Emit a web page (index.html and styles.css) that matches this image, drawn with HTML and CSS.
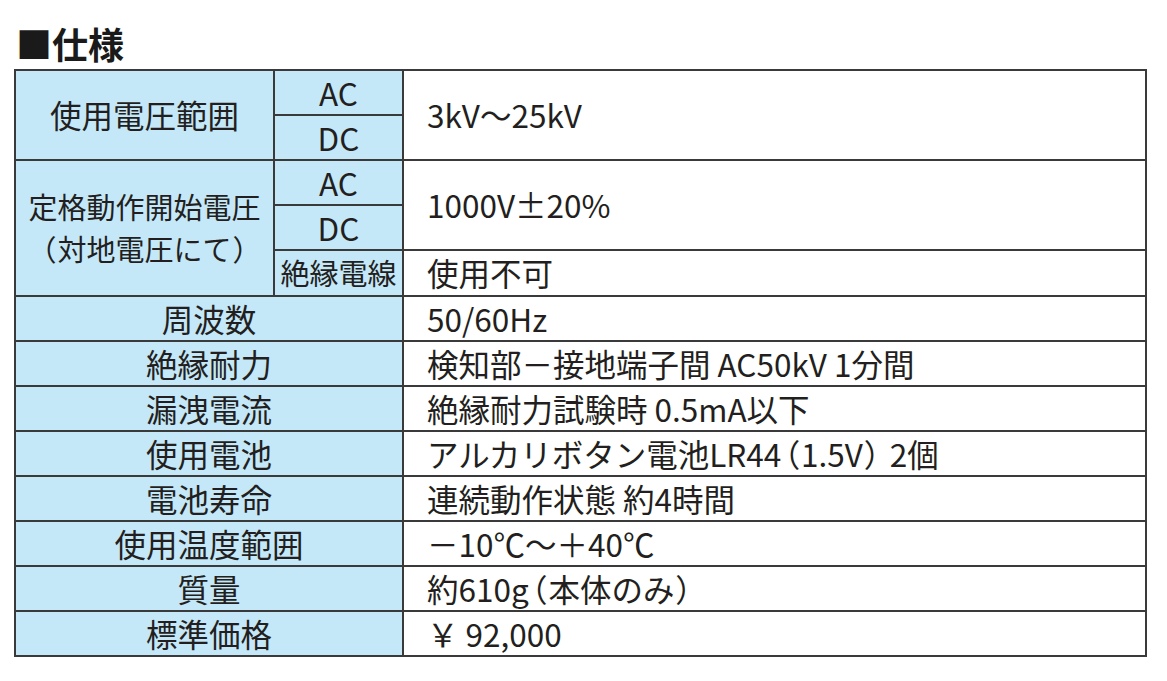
FILE: index.html
```html
<!DOCTYPE html>
<html lang="ja">
<head>
<meta charset="utf-8">
<link rel="stylesheet" href="styles.css">
</head>
<body>
<div class="page">
  <h1 class="title">■仕様</h1>
  <table class="spec">
    <colgroup>
      <col class="c1"><col class="c2"><col class="c3">
    </colgroup>
    <tr>
      <th class="lbl" rowspan="2">使用電圧範囲</th>
      <th class="sub">AC</th>
      <td class="val" rowspan="2">3kV～25kV</td>
    </tr>
    <tr>
      <th class="sub">DC</th>
    </tr>
    <tr>
      <th class="lbl small" rowspan="3">定格動作開始電圧<br><span class="p">（</span>対地電圧にて<span class="p">）</span></th>
      <th class="sub">AC</th>
      <td class="val" rowspan="2">1000V±20%</td>
    </tr>
    <tr>
      <th class="sub">DC</th>
    </tr>
    <tr>
      <th class="sub small">絶縁電線</th>
      <td class="val">使用不可</td>
    </tr>
    <tr><th class="lbl" colspan="2">周波数</th><td class="val">50/60Hz</td></tr>
    <tr><th class="lbl" colspan="2">絶縁耐力</th><td class="val">検知部－接地端子間 AC50kV 1分間</td></tr>
    <tr><th class="lbl" colspan="2">漏洩電流</th><td class="val">絶縁耐力試験時 0.5mA以下</td></tr>
    <tr><th class="lbl" colspan="2">使用電池</th><td class="val">アルカリボタン電池LR44<span class="p">（</span>1.5V<span class="p">）</span> 2個</td></tr>
    <tr><th class="lbl" colspan="2">電池寿命</th><td class="val">連続動作状態 約4時間</td></tr>
    <tr><th class="lbl" colspan="2">使用温度範囲</th><td class="val">－10℃～＋40℃</td></tr>
    <tr><th class="lbl" colspan="2">質量</th><td class="val">約610g<span class="p">（</span>本体のみ<span class="p">）</span></td></tr>
    <tr><th class="lbl" colspan="2">標準価格</th><td class="val">￥ 92,000</td></tr>
  </table>
</div>
</body>
</html>
```

FILE: styles.css
```css
html, body {
  margin: 0;
  padding: 0;
  background: #ffffff;
}
.page {
  padding: 25px 0 0 14px;
  font-family: "Noto Sans CJK JP", "Noto Sans", sans-serif;
  color: #231f20;
}
.title {
  margin: 0 0 8px 2px;
  font-size: 36px;
  line-height: 36px;
  font-weight: 700;
  color: #1a1a1a;
}
.spec {
  border-collapse: collapse;
  width: 1131px;
  table-layout: fixed;
}
.c1 { width: 259px; }
.c2 { width: 129px; }
.c3 { width: 743px; }
.spec tr {
  height: 45px;
}
.spec th, .spec td {
  border: 2px solid #3a3a3a;
  padding: 0 0 2px 0;
  font-size: 31.5px;
  line-height: 40px;
  font-weight: 400;
  vertical-align: middle;
  white-space: nowrap;
}
.spec th {
  background: #c5e8f9;
  text-align: center;
}
.spec .small {
  font-size: 29px;
  line-height: 42px;
}
.spec .val {
  text-align: left;
  padding-left: 23px;
  background: #ffffff;
}
.p {
  font-feature-settings: "palt";
  margin: 0 2px;
}
```
